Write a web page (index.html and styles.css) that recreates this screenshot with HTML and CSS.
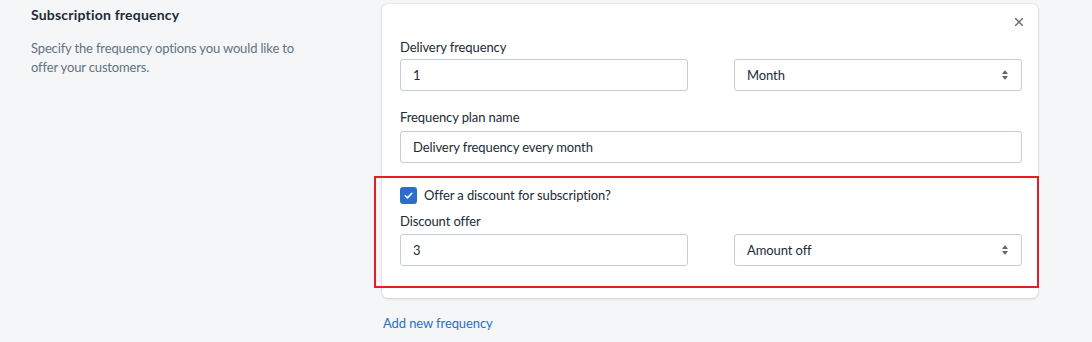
FILE: index.html
```html
<!DOCTYPE html>
<html lang="en">
<head>
    <meta charset="UTF-8">
    <meta name="viewport" content="width=device-width, initial-scale=1.0">
    <title>Subscription frequency</title>
    <link rel="stylesheet" href="styles.css">
</head>
<body>
    <div class="layout">
        <div class="annotation">
            <h2 class="section-title">Subscription frequency</h2>
            <p class="section-desc">Specify the frequency options you would like to offer your customers.</p>
        </div>

        <div class="main">
            <div class="card">
                <div class="card-head">
                    <button class="close" aria-label="Remove">
                        <svg width="8" height="8" viewBox="0 0 8 8"><path d="M0.5 0.5L7.5 7.5M7.5 0.5L0.5 7.5" stroke="#5c6873" stroke-width="1.3" stroke-linecap="round"/></svg>
                    </button>
                </div>

                <div class="field-grid">
                    <label class="label">Delivery frequency</label>
                    <div class="input input-first">1</div>
                    <div class="select">
                        <span>Month</span>
                        <svg width="18" height="18" viewBox="0 0 20 20"><path d="M7.676 9h4.648c.563 0 .879-.603.53-1.014L10.531 5.24a.708.708 0 0 0-1.062 0L7.145 7.986C6.798 8.397 7.113 9 7.676 9zm4.648 2H7.676c-.563 0-.878.603-.53 1.014l2.323 2.746c.27.32.792.32 1.062 0l2.323-2.746c.349-.411.033-1.014-.53-1.014z" fill="#5c6873"/></svg>
                    </div>
                </div>

                <div class="field plan-name">
                    <label class="label">Frequency plan name</label>
                    <div class="input">Delivery frequency every month</div>
                </div>

                <div class="discount">
                    <div class="checkbox-row">
                        <span class="checkbox">
                            <svg width="11" height="11" viewBox="0 0 12 12"><path d="M2.5 6.3L4.9 8.6L9.6 3.6" fill="none" stroke="#fff" stroke-width="1.8" stroke-linecap="round" stroke-linejoin="round"/></svg>
                        </span>
                        <span>Offer a discount for subscription?</span>
                    </div>
                    <div class="field-grid discount-grid">
                        <label class="label">Discount offer</label>
                        <div class="input input-first">3</div>
                        <div class="select">
                            <span>Amount off</span>
                            <svg width="18" height="18" viewBox="0 0 20 20"><path d="M7.676 9h4.648c.563 0 .879-.603.53-1.014L10.531 5.24a.708.708 0 0 0-1.062 0L7.145 7.986C6.798 8.397 7.113 9 7.676 9zm4.648 2H7.676c-.563 0-.878.603-.53 1.014l2.323 2.746c.27.32.792.32 1.062 0l2.323-2.746c.349-.411.033-1.014-.53-1.014z" fill="#5c6873"/></svg>
                        </div>
                    </div>
                </div>
            </div>

            <a class="add-link" href="#">Add new frequency</a>
        </div>
    </div>
</body>
</html>
```

FILE: styles.css
```css
body {
    margin: 0;
    background: #f4f6f8;
    font-family: Lato, "Open Sans", sans-serif;
    font-size: 13px;
    letter-spacing: -0.1px;
    color: #212b36;
}
.layout {
    display: grid;
    grid-template-columns: 351px 656px;
    padding: 4px 0 0 31px;
}
.section-title {
    margin: 1px 0 0;
    font-size: 14px;
    font-weight: 700;
    letter-spacing: 0.2px;
    line-height: 20px;
    color: #212b36;
}
.section-desc {
    margin: 14px 0 0;
    max-width: 280px;
    font-size: 13px;
    letter-spacing: -0.15px;
    line-height: 18.5px;
    color: #637381;
}
.card {
    background: #fff;
    border-radius: 6px;
    padding: 10px 16px 32px 18px;
    box-shadow: 0 0 0 1px rgba(63,63,68,0.05), 0 1px 3px 0 rgba(63,63,68,0.15);
}
.card-head {
    display: flex;
    justify-content: flex-end;
    height: 24px;
}
.close {
    display: flex;
    margin: 4px -1px 0 0;
    padding: 0;
    width: 8px;
    height: 8px;
    border: none;
    background: none;
    cursor: pointer;
}
.field-grid {
    display: grid;
    grid-template-columns: 1fr 1fr;
    column-gap: 46px;
}
.label {
    display: block;
    grid-column: 1 / 2;
    line-height: 18px;
    margin-bottom: 3px;
}
.input-first {
    grid-column: 1;
}
.input, .select {
    box-sizing: border-box;
    height: 32px;
    border: 1px solid #c4cdd5;
    border-radius: 3px;
    padding: 0 12px;
    display: flex;
    align-items: center;
    background: #fff;
}
.select {
    justify-content: space-between;
    padding-right: 7px;
    grid-column: 2;
    grid-row: 2;
}
.plan-name {
    margin-top: 17px;
}
.plan-name .label {
    margin-bottom: 5px;
}
.discount {
    position: relative;
    margin-top: 23px;
}
/* red annotation frame drawn over the discount block */
.discount::after {
    content: "";
    position: absolute;
    top: -10px;
    bottom: -22px;
    left: -26px;
    right: -17px;
    border: 2px solid #e81c24;
    pointer-events: none;
}
.checkbox-row {
    display: flex;
    align-items: center;
    gap: 7px;
    height: 18px;
    line-height: 18px;
}
.checkbox {
    width: 17px;
    height: 17px;
    border-radius: 3px;
    background: #2c6ecb;
    display: flex;
    align-items: center;
    justify-content: center;
}
.discount-grid {
    margin-top: 8px;
}
.discount-grid .label {
    margin-bottom: 4px;
}
.add-link {
    display: inline-block;
    margin: 16px 0 0 1px;
    line-height: 18px;
    color: #2c6ecb;
    text-decoration: none;
}
```
